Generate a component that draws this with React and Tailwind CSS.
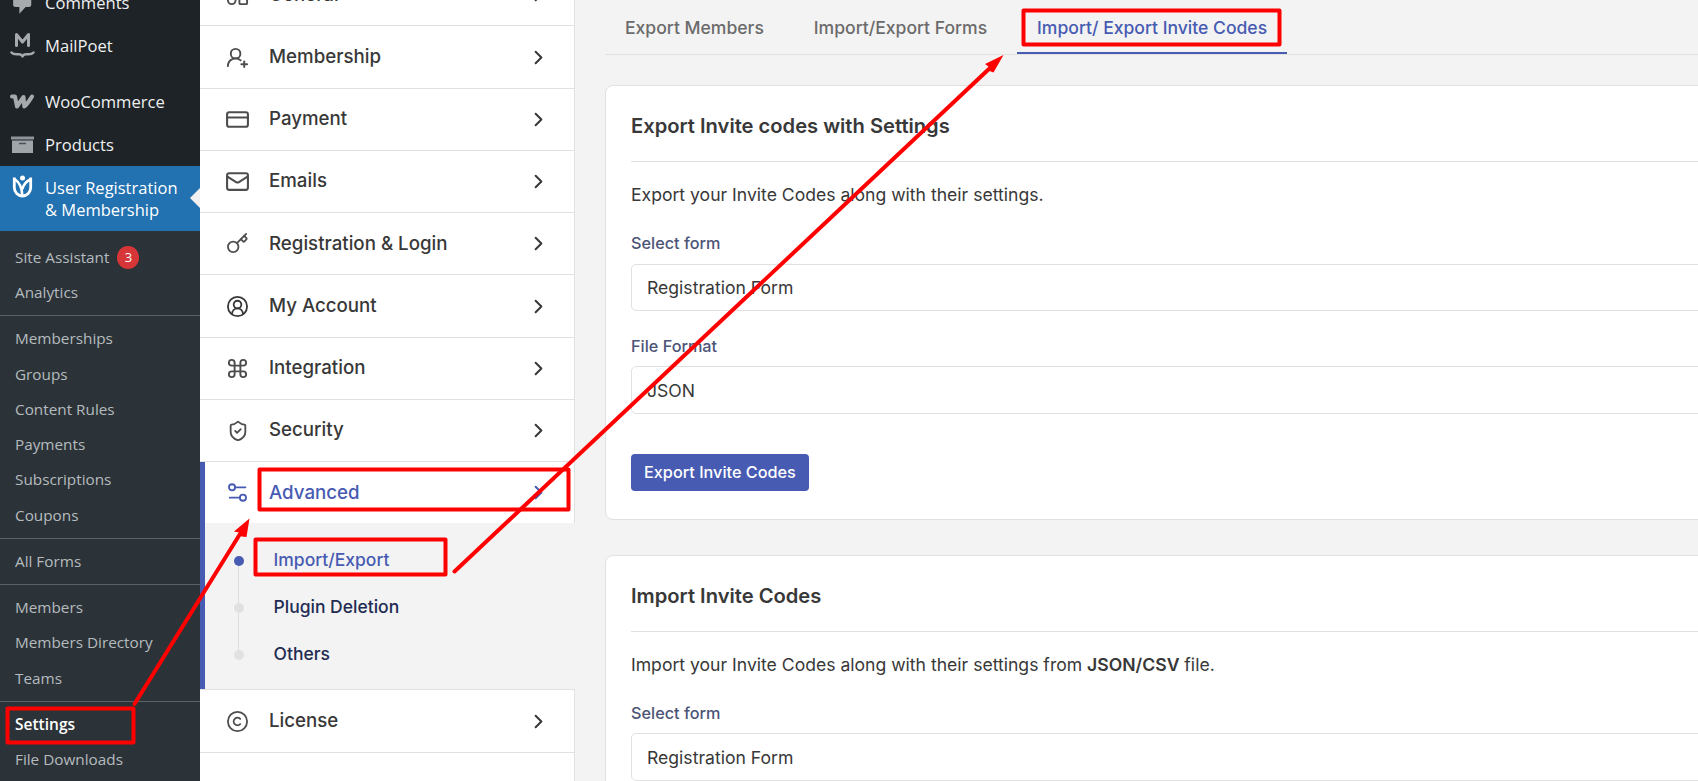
import React from "react";
import {
  ChevronRight,
  Command,
  Copyright,
  CreditCard,
  Key,
  Mail,
  ShieldCheck,
  UserRoundPlus,
} from "lucide-react";

const GeneralIcon = () => (
  <svg width="23" height="23" viewBox="0 0 24 24" fill="none" stroke="currentColor" strokeWidth="2">
    <rect x="2" y="2" width="8" height="8" rx="1.5" />
    <rect x="14" y="2" width="8" height="8" rx="1.5" />
    <rect x="2" y="14" width="8" height="8" rx="4" />
    <rect x="14" y="14" width="8" height="8" rx="1" />
  </svg>
);

const AccountIcon = () => (
  <svg width="23" height="23" viewBox="0 0 24 24" fill="none" stroke="#383838" strokeWidth="1.9" strokeLinecap="round">
    <circle cx="12" cy="12" r="10" />
    <circle cx="12" cy="10" r="4" />
    <path d="M6.2 19.6C6.6 16.4 9 14 12 14s5.4 2.4 5.8 5.6" />
  </svg>
);

const AdvancedIcon = () => (
  <svg width="23" height="23" viewBox="0 0 24 24" fill="none" stroke="currentColor" strokeWidth="1.9" strokeLinecap="round">
    <circle cx="6.3" cy="6.6" r="3.2" />
    <path d="M9.7 6.6H20.3M3.9 17.4h10.4" />
    <circle cx="17.7" cy="17.4" r="3.2" />
  </svg>
);

const mainMenu = [
  { label: "MailPoet", icon: "mailpoet", className: "h-[43px]" },
  { label: "WooCommerce", icon: "woo", className: "mt-[13px] h-[43px]" },
  { label: "Products", icon: "products", className: "h-[43px]" },
];

const subMenu = [
  ["Site Assistant", "Analytics"],
  ["Memberships", "Groups", "Content Rules", "Payments", "Subscriptions", "Coupons"],
  ["All Forms"],
  ["Members", "Members Directory", "Teams"],
  ["Settings", "File Downloads"],
];

const sections = [
  { label: "Membership", height: "h-[63px]", icon: <UserRoundPlus size={23} strokeWidth={2} /> },
  { label: "Payment", height: "h-[62px]", icon: <CreditCard size={25} strokeWidth={2} /> },
  { label: "Emails", height: "h-[62px]", icon: <Mail size={25} strokeWidth={2} /> },
  { label: "Registration & Login", height: "h-[62px]", icon: <Key size={23} strokeWidth={1.9} />, className: "pt-px" },
  { label: "My Account", height: "h-[63px]", icon: <AccountIcon /> },
  { label: "Integration", height: "h-[62px]", icon: <Command size={23} strokeWidth={2} /> },
  { label: "Security", height: "h-[62px]", icon: <ShieldCheck size={22} strokeWidth={2} /> },
];

const MenuIcon = ({ name }) => {
  if (name === "comments") {
    return (
      <svg width="25" height="25" viewBox="0 0 20 20" fill="#a7aaad">
        <path d="M4.500 2h10.500q2 0 2 2v7.500q0 2-2 2h-2.500L7.500 19v-5.500h-3q-2 0-2-2V4q0-2 2-2z" />
      </svg>
    );
  }
  if (name === "mailpoet") {
    return (
      <svg width="25" height="27" viewBox="0 0 25 27" fill="none" stroke="#a7aaad" strokeLinecap="round" strokeLinejoin="round">
        <path d="M6.5 13.5v-11l6 7.500 6-7.500v11" strokeWidth="3" />
        <path d="M1.5 20.5c2 2.500 5 1.500 8 1.700 1.500 0 2.300.8 3 2.300.7-1.500 1.500-2.300 3-2.300 3-.2 6 .8 8-1.700" strokeWidth="2.4" />
      </svg>
    );
  }
  if (name === "woo") {
    return (
      <svg width="25" height="16" viewBox="0 0 25 16" fill="none" stroke="#a7aaad" strokeLinecap="round" strokeLinejoin="round">
        <path d="M2 2.5h3l2 10L13.500 3l.8 9.500c3.200-2.500 5.200-6 7.700-10" strokeWidth="4" />
      </svg>
    );
  }
  if (name === "products") {
    return (
      <svg width="25" height="18" viewBox="0 0 25 18">
        <path d="M1 .5h23v3H1z" fill="#8f949a" />
        <path d="M2 4.5h21V17H2z" fill="#a0a5aa" />
        <path d="M9 7.5h7" stroke="#4b5157" strokeWidth="1.5" />
      </svg>
    );
  }
  return (
    <svg width="25" height="25" viewBox="0 0 25 25" fill="none" stroke="#fff">
      <circle cx="12.5" cy="3" r="2.5" fill="#fff" stroke="none" />
      <path d="M4.300 2.500v10a8.200 8.500 0 0 0 16.400 0v-10" strokeWidth="2.8" />
      <path d="M4.500 4c4.500 3 7.500 8 7.700 16M20.500 4.500c-4.500 2-7 4.500-8 9.500" strokeWidth="2.6" />
    </svg>
  );
};

const AdminMenu = () => (
  <aside className="flex h-full w-[200px] shrink-0 flex-col bg-[#1d2327] font-['Open_Sans',sans-serif] text-[16.6px] text-[#f0f0f1]">
    <div className="-mt-[19px] flex h-[43px] shrink-0 items-center pl-[10px]">
      <MenuIcon name="comments" />
      <span className="ml-[10px] pt-[2px]">Comments</span>
    </div>
    {mainMenu.map((item) => (
      <div key={item.label} className={`flex shrink-0 items-center pl-[10px] ${item.className}`}>
        <MenuIcon name={item.icon} />
        <span className="ml-[10px] pt-[2px]">{item.label}</span>
      </div>
    ))}

    <div className="relative flex h-[65px] shrink-0 bg-[#2271b1] pl-[10px] pt-[9px] text-white">
      <MenuIcon name="membership" />
      <span className="ml-[10px] pt-[2px] text-[16.5px] leading-[22px]">
        User Registration
        <br />
        &amp; Membership
      </span>
      <span className="absolute right-0 top-[22px] border-y-[10px] border-r-[10px] border-y-transparent border-r-[#f0f0f1]" />
    </div>

    <div className="grow bg-[#2c3338] pt-[8.7px] text-[15.3px] text-[#b5bbbf]">
      {subMenu.map((group, index) => (
        <ul
          key={group[0]}
          className={index > 0 ? "mt-[5px] border-t border-[#5d6267] pt-[5px]" : ""}
        >
          {group.map((label) => (
            <li
              key={label}
              className={`flex h-[35.25px] items-center pl-[15px] ${
                label === "Settings" ? "text-[15.5px] font-semibold text-white" : ""
              }`}
            >
              {label}
              {label === "Site Assistant" && (
                <span className="ml-2 flex h-[23px] w-[22px] items-center justify-center rounded-full bg-[#d63638] text-[13px] text-white">
                  3
                </span>
              )}
            </li>
          ))}
        </ul>
      ))}
    </div>
  </aside>
);

const SectionRow = ({ label, icon, height, className = "" }) => (
  <div className={`flex shrink-0 items-center border-b border-r border-[#e1e1e1] bg-white pl-[25px] pr-[24px] text-[#383838] ${height}`}>
    <span className="flex w-[25px] justify-center text-[#4d4d4d]">{icon}</span>
    <span className={`ml-[19px] text-[18.7px] font-medium ${className}`}>{label}</span>
    <ChevronRight className="ml-auto" size={23} strokeWidth={2.1} />
  </div>
);

const SettingsNav = () => (
  <nav className="flex h-full w-[375px] shrink-0 flex-col">
    <div className="-mt-[36px] flex shrink-0 flex-col">
      <SectionRow label="General" icon={<GeneralIcon />} height="h-[62px]" className="pt-[2px]" />
    </div>
    {sections.map((section) => (
      <SectionRow key={section.label} {...section} />
    ))}

    <div className="shrink-0 border-l-[5px] border-[#475bb2]">
      <div className="flex h-[61px] items-center border-r border-r-[#e1e1e1] bg-white pl-5 pr-[24px] text-[#475bb2]">
        <span className="flex w-[25px] justify-center">
          <AdvancedIcon />
        </span>
        <span className="ml-[19px] pt-[2px] text-[18.7px] font-medium">Advanced</span>
        <ChevronRight className="ml-auto" size={23} strokeWidth={2.1} />
      </div>
      <ul className="h-[166px] pl-[29px] pt-[14px] text-[17.5px] font-medium text-[#222b52]">
        <li className="flex h-[47px] items-center text-[#475bb2]">
          <span className="relative mr-[29.5px] size-[10px] rounded-full bg-[#475bb2]">
            <span className="absolute left-1 top-[10px] h-[37px] w-px bg-[#dedede]" />
          </span>
          Import/Export
        </li>
        <li className="flex h-[47px] items-center">
          <span className="relative mr-[29.5px] size-[10px] rounded-full bg-[#e1e1e1]">
            <span className="absolute left-1 top-[10px] h-[37px] w-px bg-[#dedede]" />
          </span>
          Plugin Deletion
        </li>
        <li className="flex h-[47px] items-center">
          <span className="mr-[29.5px] size-[10px] rounded-full bg-[#e1e1e1]" />
          Others
        </li>
      </ul>
    </div>

    <div className="flex shrink-0 flex-col border-t border-[#e1e1e1]">
      <SectionRow label="License" icon={<Copyright size={23} strokeWidth={1.9} />} height="h-[63px]" />
    </div>
    <div className="grow border-r border-[#e1e1e1] bg-white" />
  </nav>
);

const SelectField = ({ label, value, className, boxClassName }) => (
  <div className={className}>
    <label className="block text-[16.25px] font-medium leading-[20px] text-[#4c5477]">
      {label}
    </label>
    <div className={`flex items-center rounded-[5px] border border-[#e1e1e1] pl-[15px] pt-[2px] text-[17.6px] text-[#383838] ${boxClassName}`}>
      {value}
    </div>
  </div>
);

const Card = ({ title, description, children }) => (
  <section className="h-[435px] shrink-0 rounded-lg border border-[#e1e1e1] bg-white px-[25px] pt-[25px] text-[#383838]">
    <h3 className="border-b border-[#e1e1e1] pb-[20px] text-[20.15px] font-semibold leading-[30px]">
      {title}
    </h3>
    <p className="mt-[20px] text-[17.58px] leading-[26px]">{description}</p>
    {children}
  </section>
);

const Annotations = () => (
  <svg
    className="pointer-events-none absolute left-0 top-0"
    width="1698"
    height="781"
    viewBox="0 0 1698 781"
    fill="none"
    stroke="#ff0000"
    strokeWidth="4"
    strokeLinecap="round"
    strokeLinejoin="round"
  >
    <rect x="7.5" y="708.5" width="126" height="34" />
    <rect x="259.5" y="469.5" width="309" height="40" />
    <rect x="255.5" y="539.5" width="190" height="35" />
    <rect x="1023.5" y="10.5" width="256" height="34" />
    <path d="M134.5 704L240 534" />
    <path d="M249.5 518.5L234 531.5l5 1 2.500 4 5 .5z" fill="#ff0000" stroke="none" />
    <path d="M454.5 571.5L990 68" />
    <path d="M1003.5 55L985 64l4 3 .5 4 4 1.500z" fill="#ff0000" stroke="none" />
  </svg>
);

const App = () => {
  return (
    <div className="relative flex h-screen w-full overflow-hidden bg-[#f3f3f3] font-['Inter',sans-serif]">
      <AdminMenu />
      <SettingsNav />

      <main className="-mr-16 flex min-w-0 grow flex-col pl-[30px]">
        <div className="flex h-[55px] shrink-0 gap-[10px] border-b border-[#e1e1e1] text-[17.56px] font-medium text-[#6b6b6b]">
          <div className="px-5 pt-[15px]">Export Members</div>
          <div className="px-5 pt-[15px]">Import/Export Forms</div>
          <div className="border-b-2 border-[#475bb2] px-5 pt-[15px] text-[#475bb2]">
            Import/ Export Invite Codes
          </div>
        </div>

        <div className="mt-[30px] flex flex-col gap-[35px]">
          <Card
            title="Export Invite codes with Settings"
            description="Export your Invite Codes along with their settings."
          >
            <SelectField label="Select form" value="Registration Form" className="mt-[25px]" boxClassName="mt-[11px] h-[47px]" />
            <SelectField label="File Format" value="JSON" className="mt-[25px]" boxClassName="mt-[10px] h-[48px]" />
            <button className="mt-[40px] h-[37px] rounded bg-[#475bb2] px-[13px] text-[16.25px] font-medium text-white">
              Export Invite Codes
            </button>
          </Card>

          <Card
            title="Import Invite Codes"
            description={
              <>
                Import your Invite Codes along with their settings from{" "}
                <span className="font-semibold">JSON/CSV</span> file.
              </>
            }
          >
            <SelectField label="Select form" value="Registration Form" className="mt-[25px]" boxClassName="mt-[10px] h-[48px]" />
          </Card>
        </div>
      </main>

      <Annotations />
    </div>
  );
};

export default App;
